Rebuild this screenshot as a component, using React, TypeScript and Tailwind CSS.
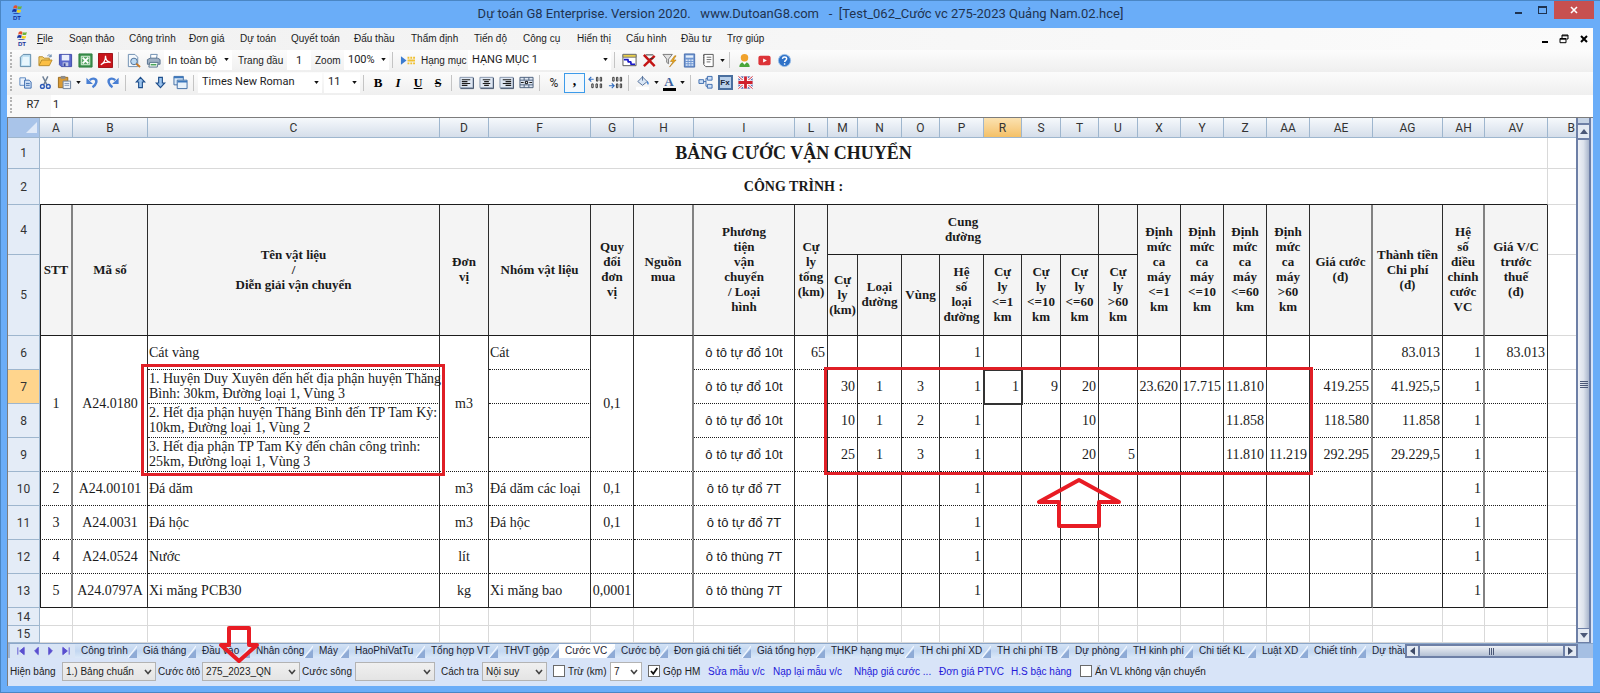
import React from "react";
import type { ReactNode } from "react";

const UI = "font-['Liberation_Sans',Arial,sans-serif]";
const SEGOE = "font-['Roboto','Noto_Sans',sans-serif]";
const SERIF = "font-['Liberation_Serif','Times_New_Roman',serif]";

/* ---------- shared pieces ---------- */

function Svg({ children, size = "size-[15px]", box = "0 0 16 16" }: { children: ReactNode; size?: string; box?: string }) {
  return (
    <svg viewBox={box} className={`${size} shrink-0`} fill="none" aria-hidden="true">
      {children}
    </svg>
  );
}

function Caret() {
  return (
    <svg viewBox="0 0 6 4" className="h-[3px] w-[5px] shrink-0" aria-hidden="true">
      <path d="M0 0h6L3 4z" fill="#111" />
    </svg>
  );
}

function Sep() {
  return <span className="ml-[3px] mr-1 h-4 w-px shrink-0 bg-[#c4c4c4]" />;
}

function Grip() {
  return <span className="ml-[3px] mr-[3px] h-4 w-0 shrink-0 border-l-2 border-dotted border-[#b4b4b4]" />;
}

function Tool({ label, children, wide }: { label: string; children: ReactNode; wide?: boolean }) {
  return (
    <button
      type="button"
      aria-label={label}
      className={`flex h-5 shrink-0 items-center justify-center gap-1 ${wide ? "w-[27px]" : "w-5"}`}
    >
      {children}
      {wide && <Caret />}
    </button>
  );
}

function Combo({ label, value, width, text }: { label: string; value: string; width: string; text: string }) {
  return (
    <span className={`relative flex h-5 shrink-0 items-center bg-white ${width}`}>
      <select aria-label={label} className={`h-full w-full appearance-none bg-transparent pl-1 text-[#1c1c1c] ${text}`}>
        <option>{value}</option>
      </select>
      <span className="pointer-events-none absolute right-[3px] top-2">
        <Caret />
      </span>
    </span>
  );
}

/* ---------- title bar ---------- */

function Logo() {
  return (
    <span className="flex w-3.5 shrink-0 flex-col items-center">
      <Svg size="h-2.5 w-3.5" box="0 0 14 11">
        <path d="M3.500 1c1.600-.9 2.800-.8 4 0L7 4c-1.500-.7-2.800-.7-4.300 0z" fill="#e8502a" />
        <path d="M8 1.300c1.600.6 2.800.6 4.300-.2L11.600 4c-1.500.7-2.800.7-4.200 0z" fill="#6db33a" />
        <path d="M2.300 5c1.600-.9 2.800-.8 4.400 0L6 8c-1.500-.7-2.800-.7-4.500 0z" fill="#16339e" />
        <path d="M7.200 5.300c1.600.6 2.800.6 4.300-.2L10.900 8c-1.500.7-2.800.7-4.300 0z" fill="#f4d416" />
        <path d="M2 9h6l3 1H4z" fill="#16339e" />
      </Svg>
      <span className={`text-[6px] font-bold leading-[6px] text-[#14309a] ${UI}`}>DT</span>
    </span>
  );
}

function TitleBar() {
  return (
    <header className={`relative flex h-7 items-start justify-between pl-[9px] ${SEGOE}`}>
      <span className="mt-[5px]">
        <Logo />
      </span>
      <h1 className="absolute inset-x-0 top-1 whitespace-pre text-center text-[13px] leading-5 text-[#1f3350]">
        {"Dự toán G8 Enterprise. Version 2020.   www.DutoanG8.com   -  [Test_062_Cước vc 275-2023 Quảng Nam.02.hce]"}
      </h1>
      <div className="relative mr-1.5 mt-px flex h-[18px]">
        <button type="button" aria-label="Thu nhỏ" className="flex w-6 items-end justify-center pb-[5px]">
          <span className="h-[2px] w-[7px] bg-[#1f3350]" />
        </button>
        <button type="button" aria-label="Phóng to" className="flex w-6 items-center justify-center">
          <span className="h-2 w-[9px] border border-t-2 border-[#1f3350]" />
        </button>
        <button type="button" aria-label="Đóng" className="flex w-10 items-center justify-center bg-[#c75050]">
          <Svg size="size-2" box="0 0 8 8">
            <path d="M1 1l6 6M7 1L1 7" stroke="#fff" strokeWidth="1.600" />
          </Svg>
        </button>
      </div>
    </header>
  );
}

/* ---------- menu ---------- */

const MENU: [string, string][] = [
  ["Soạn thảo", "w-[60px]"],
  ["Công trình", "w-[60px]"],
  ["Đơn giá", "w-[51px]"],
  ["Dự toán", "w-[51px]"],
  ["Quyết toán", "w-[63px]"],
  ["Đấu thầu", "w-[57px]"],
  ["Thẩm định", "w-[63px]"],
  ["Tiến độ", "w-[49px]"],
  ["Công cụ", "w-[54px]"],
  ["Hiển thị", "w-[49px]"],
  ["Cấu hình", "w-[55px]"],
  ["Đầu tư", "w-[46px]"],
  ["Trợ giúp", "w-[60px]"],
];

function MenuBar() {
  return (
    <nav className={`flex h-[22px] items-center bg-linear-to-r from-[#f1f1f1] to-[#fbfbfb] pb-px pl-2 text-[10px] text-[#1c1c1c] ${UI}`}>
      <Logo />
      <button type="button" className="ml-2 w-8 text-left">
        <span className="underline">F</span>ile
      </button>
      {MENU.map(([name, width]) => (
        <button key={name} type="button" className={`whitespace-nowrap text-left ${width}`}>
          {name}
        </button>
      ))}
      <div className="ml-auto mr-[5px] flex items-center gap-[11px]">
        <button type="button" aria-label="Thu nhỏ cửa sổ con" className="flex h-2 w-1.5 items-end">
          <span className="h-[2px] w-full bg-black" />
        </button>
        <button type="button" aria-label="Khôi phục cửa sổ con">
          <Svg size="size-2.5" box="0 0 10 10">
            <path d="M3 4V1h6v4H7.500M3 1.800h6M1 8.700V4.500h6v4.200zM1 5.200h6" stroke="#000" />
          </Svg>
        </button>
        <button type="button" aria-label="Đóng cửa sổ con">
          <Svg size="size-2" box="0 0 8 8">
            <path d="M1 1l6 6M7 1L1 7" stroke="#000" strokeWidth="2" />
          </Svg>
        </button>
      </div>
    </nav>
  );
}

/* ---------- toolbars ---------- */

const BAR = "flex items-center bg-linear-to-b from-[#fcfcfc] to-[#efefef] pb-[2px]";

function MainToolbar() {
  return (
    <div role="toolbar" aria-label="Công cụ chính" className={`${BAR} h-[22px]`}>
      <Grip />
      <Tool label="Tạo mới">
        <Svg>
          <path d="M2.500 4.500l3-3h8v13h-11z" fill="#b9dcf0" stroke="#5d87a8" />
          <path d="M5 4h7v9H4z" fill="#e8f6fd" />
        </Svg>
      </Tool>
      <Tool label="Mở">
        <Svg>
          <path d="M1 13V4h4l1.500 1.500H12V8" fill="#f5d06a" stroke="#b88a2a" />
          <path d="M1 13.500L4 7.500h11l-3 6z" fill="#fbbf45" stroke="#b88a2a" />
          <path d="M10 3c1.500-1.500 3-1 4 .5m0-2v2.500h-2.500" stroke="#5a7fa8" />
        </Svg>
      </Tool>
      <Tool label="Lưu">
        <Svg>
          <path d="M1.500 1.500h13v13h-11l-2-2z" fill="#5a68cc" stroke="#3d4aa8" />
          <path d="M4 2h8v6H4z" fill="#e9eefb" />
          <path d="M5 10h6v4H5z" fill="#c3cae6" />
          <path d="M6 11h2v3H6z" fill="#33409a" />
        </Svg>
      </Tool>
      <Tool label="Xuất Excel">
        <Svg>
          <path d="M1 1h14v14H1z" fill="#3f9450" stroke="#2a7a3c" />
          <path d="M3.500 3.500h9v9h-9z" fill="#5aa868" stroke="#e4f3e5" />
          <path d="M5 5l6 6M11 5l-6 6" stroke="#fff" strokeWidth="2" />
        </Svg>
      </Tool>
      <Tool label="Xuất PDF">
        <Svg>
          <path d="M.5.500h15v15H.5z" fill="#c8141a" stroke="#9c0d12" />
          <path d="M3 12.500c3-1.500 5-5.500 5-9.500 0 4 2 6.500 5.500 7C10 9.500 6 10 3 12.500z" stroke="#fff" strokeWidth="1.300" />
        </Svg>
      </Tool>
      <Sep />
      <Tool label="Xem trước">
        <Svg>
          <path d="M2.500 1.500h7l3 3v10h-10z" fill="#f4f8fc" stroke="#6c8caf" />
          <circle cx="8.500" cy="9" r="3.500" fill="#bcd9f2" stroke="#4d6f97" />
          <path d="M11 11.500l4 3.500" stroke="#c77a2b" strokeWidth="2" />
        </Svg>
      </Tool>
      <Tool label="In">
        <Svg>
          <path d="M5 6V1.500h7L11 6" fill="#fff" stroke="#6c8caf" />
          <path d="M1.500 7l3-1.500h8L15 7v5H1.500z" fill="#9fb0c4" stroke="#56708d" />
          <path d="M4 10h9l-1 5H3z" fill="#eefaee" stroke="#56708d" />
          <path d="M5 12.500h6" stroke="#4aa35a" strokeWidth="1.500" />
        </Svg>
      </Tool>
      <span className="w-px" />
      <Combo label="Phạm vi in" value="In toàn bộ" width="w-[68px]" text={`text-[11px] ${UI}`} />
      <label className={`flex items-center whitespace-nowrap pl-1.5 text-[10px] text-[#222] ${UI}`}>
        <span className="w-[49px]">Trang đầu</span>
        <input defaultValue="1" className={`h-5 w-6 bg-white text-center text-[11px] ${SEGOE}`} />
      </label>
      <span className={`w-[33px] pl-1 text-[10px] text-[#222] ${UI}`}>Zoom</span>
      <Combo label="Zoom" value="100%" width="w-[45px]" text={`text-[11px] ${SEGOE}`} />
      <Sep />
      <Tool label="Chèn hạng mục">
        <Svg>
          <path d="M1 3.500l6 4.500-6 4.500z" fill="#3b7bd0" />
          <path d="M8 4h2v2H8zM11 4h2v2h-2zM14 4h2v2h-2zM8 10h2v2H8zM11 10h2v2h-2zM14 10h2v2h-2zM8 7h8v2H8z" fill="#f0c030" />
        </Svg>
      </Tool>
      <span className={`w-[51px] whitespace-nowrap pl-1 text-[10px] text-[#222] ${UI}`}>Hạng mục</span>
      <Combo label="Hạng mục" value="HẠNG MỤC 1" width="w-[143px]" text={`text-[11px] ${SEGOE}`} />
      <Sep />
      <Tool label="Tiến độ">
        <Svg>
          <path d="M1 1.500h14v12H1z" fill="#fff" stroke="#555" />
          <path d="M1 1.500h14v3H1z" fill="#e8cf4a" stroke="#777" />
          <path d="M2 7h5M6 9.500h4M9 12h5M6.500 7v2.500M9.500 9.500V12" stroke="#1818c8" strokeWidth="1.800" />
        </Svg>
      </Tool>
      <Tool label="Xóa">
        <Svg>
          <path d="M2 2l11.500 12M13.500 3L2 14" stroke="#c41414" strokeWidth="2.600" />
          <path d="M4 2h8M8 6h4" stroke="#333" />
        </Svg>
      </Tool>
      <Tool label="Lọc nhanh">
        <Svg>
          <path d="M1 1.500h10L7 6.500v5l-2-1.500V6.500z" fill="#e2e2e2" stroke="#777" />
          <path d="M13.500 3L9 9h3l-4 6 7-7.500h-3L15 3z" fill="#f6b21c" stroke="#a86c10" strokeWidth=".6" />
        </Svg>
      </Tool>
      <Tool label="Máy tính">
        <Svg>
          <path d="M2.500 1h11v14h-11z" fill="#6f96d2" stroke="#4a6fae" />
          <path d="M4 2.500h8v2.500H4z" fill="#e6f0fb" />
          <path d="M4 7h2v1.500H4zM7 7h2v1.500H7zM10 7h2v1.500h-2zM4 9.500h2V11H4zM7 9.500h2V11H7zM10 9.500h2V11h-2zM4 12h2v1.500H4zM7 12h2v1.500H7zM10 12h2v1.500h-2z" fill="#dbe7f7" />
        </Svg>
      </Tool>
      <Tool label="Ghi chú" wide>
        <Svg>
          <path d="M3 1.500h10v13H5l-2-2z" fill="#fff" stroke="#555" />
          <path d="M6 4.500h5M6 7h5M6 9.500h4" stroke="#666" />
          <path d="M3 2v10" stroke="#333" strokeDasharray="1 1" />
        </Svg>
      </Tool>
      <Sep />
      <Tool label="Người dùng">
        <Svg>
          <path d="M2.500 15c0-4 2.500-5.500 5.500-5.500s5.500 1.500 5.500 5.500z" fill="#4aa63a" />
          <circle cx="8" cy="5" r="4" fill="#f0a22c" />
          <path d="M5.500 9.500L8 12.500l2.500-3z" fill="#fff" />
        </Svg>
      </Tool>
      <Tool label="Video">
        <Svg>
          <rect x="1.500" y="3" width="13" height="10" rx="2" fill="#dc3338" />
          <path d="M6.500 5.800l4 2.200-4 2.200z" fill="#fff" />
        </Svg>
      </Tool>
      <Tool label="Trợ giúp">
        <Svg>
          <circle cx="8" cy="8" r="6.500" fill="#2f72c8" stroke="#9bbfe8" />
          <path d="M5.800 6.300C6 4.800 7 4.300 8.100 4.300c1.300 0 2.200.8 2.200 1.900 0 1.600-2.200 1.700-2.200 3.500M8.100 11v1.500" stroke="#fff" strokeWidth="1.500" />
        </Svg>
      </Tool>
    </div>
  );
}

function AlignIcon({ d }: { d: string }) {
  return (
    <Svg>
      <path d="M1 2.500h14v11H1z" fill="#dfe7f2" stroke="#8494ab" />
      <path d="M15.500 3v11.500H1.500" stroke="#3f4f68" />
      <path d={d} stroke="#1e1e1e" strokeWidth="1.200" />
    </Svg>
  );
}

function FormatToolbar() {
  return (
    <div role="toolbar" aria-label="Định dạng" className={`${BAR} h-[23px]`}>
      <Grip />
      <Tool label="Sao chép">
        <Svg>
          <path d="M2 3h6v8H2z" fill="#eaf2fc" stroke="#5a86c0" />
          <path d="M7 5.500h5l2 2V14H7z" fill="#cfe0f6" stroke="#3c6cae" />
          <path d="M8.500 9h4M8.500 11h4" stroke="#3c6cae" />
        </Svg>
      </Tool>
      <Tool label="Cắt">
        <Svg>
          <path d="M5 1.500l4.500 9M10.500 1.500L6 10.500" stroke="#6d7f96" strokeWidth="1.500" />
          <circle cx="4.700" cy="12.200" r="2" stroke="#2c59b8" strokeWidth="1.500" />
          <circle cx="11" cy="12.200" r="2" stroke="#2c59b8" strokeWidth="1.500" />
        </Svg>
      </Tool>
      <Tool label="Dán" wide>
        <Svg>
          <path d="M1.500 2.500h10v11h-10z" fill="#d99a35" stroke="#9a6a1c" />
          <path d="M4 1h5v3H4z" fill="#8d8d8d" />
          <path d="M6.500 6.500h8v8h-8z" fill="#eef3fa" stroke="#6a7f9c" />
          <path d="M8 9h5M8 11h5" stroke="#7c93b2" />
        </Svg>
      </Tool>
      <Tool label="Hoàn tác">
        <Svg>
          <path d="M5 5.500C8.500 2.500 13 4 12 8c-.6 2.300-2 3.700-4 5" stroke="#4a80d4" strokeWidth="2.600" />
          <path d="M1.500 3v6.500h7z" fill="#4a80d4" />
        </Svg>
      </Tool>
      <Tool label="Làm lại">
        <Svg>
          <path d="M11 5.500C7.500 2.500 3 4 4 8c.6 2.300 2 3.700 4 5" stroke="#4a80d4" strokeWidth="2.600" />
          <path d="M14.500 3v6.500h-7z" fill="#4a80d4" />
        </Svg>
      </Tool>
      <Sep />
      <Tool label="Lên">
        <Svg>
          <path d="M8 2.500l4.500 5H10v6H6v-6H3.500z" fill="#9cc4ee" stroke="#1f4f8c" strokeWidth="1.200" />
        </Svg>
      </Tool>
      <Tool label="Xuống">
        <Svg>
          <path d="M8 13.500l4.500-5H10v-6H6v6H3.500z" fill="#9cc4ee" stroke="#1f4f8c" strokeWidth="1.200" />
        </Svg>
      </Tool>
      <Tool label="Cửa sổ">
        <Svg>
          <path d="M1 1.500h10v9H1z" fill="#dceaf8" stroke="#3f6da4" />
          <path d="M4.500 5.500h10.500v9H4.500z" fill="#e8f2fb" stroke="#3f6da4" />
          <path d="M1 2.500h10M5 7h10" stroke="#3c78bd" strokeWidth="2" />
        </Svg>
      </Tool>
      <Sep />
      <Combo label="Phông chữ" value="Times New Roman" width="w-[124px]" text={`text-[11px] ${SEGOE}`} />
      <span className="w-[2px]" />
      <Combo label="Cỡ chữ" value="11" width="w-[36px]" text={`text-[11px] ${SEGOE}`} />
      <Sep />
      <Tool label="Đậm">
        <b className={`text-[13px] ${SERIF}`}>B</b>
      </Tool>
      <Tool label="Nghiêng">
        <b className={`text-[13px] italic ${SERIF}`}>I</b>
      </Tool>
      <Tool label="Gạch chân">
        <b className={`text-[12px] underline ${SERIF}`}>U</b>
      </Tool>
      <Tool label="Gạch ngang">
        <b className={`text-[12px] line-through ${SERIF}`}>S</b>
      </Tool>
      <Sep />
      <Tool label="Canh trái">
        <AlignIcon d="M3 5h9M3 7h6M3 9h9M3 11h6" />
      </Tool>
      <Tool label="Canh giữa">
        <AlignIcon d="M4 5h8M5.500 7h5M4 9h8M5.500 11h5" />
      </Tool>
      <Tool label="Canh phải">
        <AlignIcon d="M4 5h9M7 7h6M4 9h9M7 11h6" />
      </Tool>
      <Tool label="Trộn ô">
        <Svg>
          <path d="M1 2.500h14v11H1zM1 5.500h14M1 10.500h14M5.500 2.500v3M10.500 2.500v3M5.500 10.500v3M10.500 10.500v3" fill="#dfe7f2" stroke="#4b5f7c" />
          <path d="M2 8h3M11 8h3" stroke="#1e1e1e" strokeWidth="1.200" />
          <circle cx="8" cy="8" r="1.300" stroke="#1e1e1e" strokeWidth="1.200" />
        </Svg>
      </Tool>
      <Sep />
      <Tool label="Phần trăm">
        <span className={`text-[12px] text-[#222] ${SEGOE}`}>%</span>
      </Tool>
      <button
        type="button"
        aria-label="Phân cách hàng nghìn"
        className={`h-5 w-[21px] shrink-0 border border-[#3c9bea] bg-[#f2f8fd] pb-1 text-[14px] font-bold leading-3 ${SERIF}`}
      >
        ,
      </button>
      <Tool label="Thêm số lẻ">
        <Svg>
          <path d="M1 4.500h5M3.500 2L1 4.500 3.500 7" stroke="#2f6cc0" strokeWidth="1.200" />
          <path d="M9 2.500h1.500v4H9zM13 2.500h1.500v4H13zM4 9.500h1.500v4H4zM8.500 9.500H10v4H8.500zM13 9.500h1.500v4H13z" stroke="#333" />
        </Svg>
      </Tool>
      <Tool label="Bớt số lẻ">
        <Svg>
          <path d="M1 11.500h5M4 9l2.500 2.500L4 14" stroke="#2f6cc0" strokeWidth="1.200" />
          <path d="M5 2.500h1.500v4H5zM9 2.500h1.500v4H9zM13 2.500h1.500v4H13zM9 9.500h1.500v4H9zM13 9.500h1.500v4H13z" stroke="#333" />
        </Svg>
      </Tool>
      <Sep />
      <Tool label="Màu nền" wide>
        <Svg>
          <path d="M3 7l5-5 5 5-5 4z" fill="#d9e6f5" stroke="#54709a" />
          <path d="M8 1v5" stroke="#54709a" />
          <path d="M13 6c2 2 2 3 1 4.500-1.200-1-1.400-2.500-1-4.500z" fill="#3f7fd2" />
          <path d="M1 12.500h14V16H1z" fill="#fff" />
        </Svg>
      </Tool>
      <Tool label="Màu chữ" wide>
        <span className={`flex h-4 w-[13px] flex-col items-center justify-end border-b-[3px] border-black text-[13px] font-bold leading-3 text-[#3a5f9c] ${SERIF}`}>
          A
        </span>
      </Tool>
      <Sep />
      <Tool label="Sơ đồ">
        <Svg>
          <path d="M1 5h5v4H1zM10 1.500h5v4h-5zM10 10h5v4h-5z" fill="#cfe0f6" stroke="#3c6cae" />
          <path d="M6 7h2.500M10 3.500H8.500v8.500H10" stroke="#3c6cae" />
        </Svg>
      </Tool>
      <Tool label="Hàm">
        <span className={`flex size-[15px] items-center justify-center border-2 border-[#4a6f9f] bg-[#b9d0ea] text-[8px] font-bold text-[#16233a] ${UI}`}>
          Fx
        </span>
      </Tool>
      <Tool label="Ngôn ngữ">
        <Svg>
          <path d="M.5 1.500h15v13H.5z" fill="#4a5ba8" />
          <path d="M.5 1.500l15 13M15.500 1.500l-15 13" stroke="#fff" strokeWidth="3" />
          <path d="M.5 1.500l15 13M15.500 1.500l-15 13" stroke="#d0202c" strokeWidth="1" />
          <path d="M8 1.500v13M.5 8h15" stroke="#fff" strokeWidth="5" />
          <path d="M8 1.500v13M.5 8h15" stroke="#d0202c" strokeWidth="3" />
        </Svg>
      </Tool>
    </div>
  );
}

function FormulaBar() {
  return (
    <div className={`flex h-[22px] items-center bg-white text-[11px] text-[#222] ${SEGOE}`}>
      <div className="flex h-full w-11 items-center bg-[#f8f8f8] pb-[2px]">
        <Grip />
        <span className="flex-1 text-center">R7</span>
      </div>
      <input aria-label="Công thức" defaultValue="1" className="h-full flex-1 bg-white pb-1 pl-[2px]" />
    </div>
  );
}

/* ---------- sheet ---------- */

const COLS: [string, string][] = [
  ["A", "w-[33px]"],
  ["B", "w-[75px]"],
  ["C", ""],
  ["D", "w-[49px]"],
  ["F", "w-[102px]"],
  ["G", "w-[43px]"],
  ["H", "w-[60px]"],
  ["I", "w-[101px]"],
  ["L", "w-[33px]"],
  ["M", "w-[30px]"],
  ["N", "w-[44px]"],
  ["O", "w-[38px]"],
  ["P", "w-[44px]"],
  ["R", "w-[38px]"],
  ["S", "w-[39px]"],
  ["T", "w-[38px]"],
  ["U", "w-[39px]"],
  ["X", "w-[43px]"],
  ["Y", "w-[43px]"],
  ["Z", "w-[43px]"],
  ["AA", "w-[43px]"],
  ["AE", "w-[63px]"],
  ["AG", "w-[70px]"],
  ["AH", "w-[42px]"],
  ["AV", "w-[63px]"],
];

const CENTER = ["A", "B", "D", "G", "H", "I", "N", "O"];
const LEFT = ["C", "F"];
const SOFT = ["A", "H", "AE", "AH"];

function rightLine(col: string) {
  return SOFT.includes(col) ? "border-r-2 border-r-[#828282]" : "border-r border-r-[#2c2c2c]";
}

function Head({ col, rows = 2, span = 1, children }: { col: string; rows?: number; span?: number; children?: ReactNode }) {
  return (
    <th
      rowSpan={rows}
      colSpan={span}
      className={`whitespace-pre border-b border-b-[#1c1c1c] bg-[#f4f4f4] px-0 pb-[2px] pt-0 text-center align-middle text-[13px] font-bold leading-[15px] ${rightLine(col)} ${
        col === "A" ? "border-l border-l-[#1c1c1c]" : ""
      }`}
    >
      {children}
    </th>
  );
}

function RowHead({ n, height }: { n: string; height: string }) {
  return (
    <th
      scope="row"
      className={`border-b border-r border-[#9eb6ce] p-0 text-center text-[12px] font-normal text-[#333] ${SEGOE} ${height} ${
        n === "7" ? "bg-[#ffd58d]" : "bg-[#e4ecf7]"
      }`}
    >
      {n}
    </th>
  );
}

function Outside() {
  return <td className="border-b border-[#d9d9d9] p-0" />;
}

type Row = { n: string; v: Record<string, string>; merged?: "start" | "in"; last?: boolean };

const MERGED = ["A", "B", "D", "G", "H"];

const ROWS: Row[] = [
  { n: "6", merged: "start", v: { A: "1", B: "A24.0180", C: "Cát vàng", D: "m3", F: "Cát", G: "0,1", I: "ô tô tự đổ 10t", L: "65", P: "1", AG: "83.013", AH: "1", AV: "83.013" } },
  { n: "7", merged: "in", v: { C: "1. Huyện Duy Xuyên đến hết địa phận huyện Thăng\nBình: 30km, Đường loại 1, Vùng 3", I: "ô tô tự đổ 10t", M: "30", N: "1", O: "3", P: "1", R: "1", S: "9", T: "20", X: "23.620", Y: "17.715", Z: "11.810", AE: "419.255", AG: "41.925,5", AH: "1" } },
  { n: "8", merged: "in", v: { C: "2. Hết địa phận huyện Thăng Bình đến TP Tam Kỳ:\n10km, Đường loại 1, Vùng 2", I: "ô tô tự đổ 10t", M: "10", N: "1", O: "2", P: "1", T: "10", Z: "11.858", AE: "118.580", AG: "11.858", AH: "1" } },
  { n: "9", merged: "in", v: { C: "3. Hết địa phận TP Tam Kỳ đến chân công trình:\n25km, Đường loại 1, Vùng 3", I: "ô tô tự đổ 10t", M: "25", N: "1", O: "3", P: "1", T: "20", U: "5", Z: "11.810", AA: "11.219", AE: "292.295", AG: "29.229,5", AH: "1" } },
  { n: "10", v: { A: "2", B: "A24.00101", C: "Đá dăm", D: "m3", F: "Đá dăm các loại", G: "0,1", I: "ô tô tự đổ 7T", P: "1", AH: "1" } },
  { n: "11", v: { A: "3", B: "A24.0031", C: "Đá hộc", D: "m3", F: "Đá hộc", G: "0,1", I: "ô tô tự đổ 7T", P: "1", AH: "1" } },
  { n: "12", v: { A: "4", B: "A24.0524", C: "Nước", D: "lít", I: "ô tô thùng 7T", P: "1", AH: "1" } },
  { n: "13", last: true, v: { A: "5", B: "A24.0797A", C: "Xi măng PCB30", D: "kg", F: "Xi măng bao", G: "0,0001", I: "ô tô thùng 7T", P: "1", AH: "1" } },
];

function BodyRow({ row }: { row: Row }) {
  return (
    <tr>
      <RowHead n={row.n} height="h-[34px]" />
      {COLS.map(([col]) => {
        if (row.merged === "in" && MERGED.includes(col)) return null;
        const align = CENTER.includes(col) ? "px-0 text-center" : LEFT.includes(col) ? "pl-px pr-0 text-left" : "pl-0 pr-[2px] text-right";
        const font = col === "I" ? `text-[13px] ${UI}` : "text-[14px]";
        const selected = row.n === "7" && col === "R";
        return (
          <td
            key={col}
            rowSpan={row.merged === "start" && MERGED.includes(col) ? 4 : 1}
            className={`whitespace-pre border-b border-b-[#1c1c1c] pb-px pt-0 align-middle leading-[15px] ${
              row.last ? "" : "[border-bottom-style:dotted]"
            } ${rightLine(col)} ${col === "A" ? "border-l border-l-[#1c1c1c]" : ""} ${
              selected ? "outline-2 -outline-offset-1 outline-[#333]" : ""
            } ${align} ${font}`}
          >
            {row.v[col]}
          </td>
        );
      })}
      <Outside />
    </tr>
  );
}

function Sheet() {
  return (
    <div className="relative min-w-0 flex-1">
      <table className={`w-full table-fixed border-separate border-spacing-0 bg-white text-[#1a1a1a] ${SERIF}`}>
        <colgroup>
          <col className="w-[32px]" />
          {COLS.map(([c, w]) => (
            <col key={c} className={w} />
          ))}
          <col className="w-[28px]" />
        </colgroup>
        <thead>
          <tr className={SEGOE}>
            <th aria-label="Chọn tất cả" className="h-5 border-b border-r border-[#9eb6ce] bg-[#a9c4e9] p-0">
              <svg viewBox="0 0 10 10" className="ml-auto mr-[2px] size-[11px]" aria-hidden="true">
                <path d="M10 0v10H0z" fill="#dfe9f8" />
              </svg>
            </th>
            {[...COLS.map(([c]) => c), "B "].map((c) => (
              <th
                key={c}
                scope="col"
                className={`h-5 border-b border-r border-[#9eb6ce] p-0 text-[12px] font-normal leading-4 text-[#333] ${
                  c === "R" ? "bg-linear-to-b from-[#fbe2b0] to-[#f4c066]" : "bg-linear-to-b from-[#f6f9fc] to-[#d5deea]"
                } ${c === "B " ? "border-r-0 pr-px text-right" : "text-center"}`}
              >
                {c.trim()}
              </th>
            ))}
          </tr>
        </thead>
        <tbody>
          <tr>
            <RowHead n="1" height="h-[31px]" />
            <td colSpan={25} className="border-b border-r border-[#d9d9d9] p-0 text-center text-[18px] font-bold leading-5">
              BẢNG CƯỚC VẬN CHUYỂN
            </td>
            <Outside />
          </tr>
          <tr>
            <RowHead n="2" height="h-[36px]" />
            <td colSpan={25} className="border-b border-r border-b-[#1c1c1c] border-r-[#d9d9d9] p-0 text-center text-[14px] font-bold leading-5">
              CÔNG TRÌNH :
            </td>
            <Outside />
          </tr>
          <tr>
            <RowHead n="4" height="h-[50px]" />
            <Head col="A">STT</Head>
            <Head col="B">Mã số</Head>
            <Head col="C">{"Tên vật liệu\n/\nDiễn giải vận chuyển"}</Head>
            <Head col="D">{"Đơn\nvị"}</Head>
            <Head col="F">Nhóm vật liệu</Head>
            <Head col="G">{"Quy\nđổi\nđơn\nvị"}</Head>
            <Head col="H">{"Nguồn\nmua"}</Head>
            <Head col="I">{"Phương\ntiện\nvận\nchuyển\n/ Loại\nhình"}</Head>
            <Head col="L">{"Cự\nly\ntổng\n(km)"}</Head>
            <Head col="M" rows={1} span={7}>
              {"Cung\nđường"}
            </Head>
            <Head col="U" rows={1} />
            <Head col="X">{"Định\nmức\nca\nmáy\n<=1\nkm"}</Head>
            <Head col="Y">{"Định\nmức\nca\nmáy\n<=10\nkm"}</Head>
            <Head col="Z">{"Định\nmức\nca\nmáy\n<=60\nkm"}</Head>
            <Head col="AA">{"Định\nmức\nca\nmáy\n>60\nkm"}</Head>
            <Head col="AE">{"Giá cước\n(đ)"}</Head>
            <Head col="AG">{"Thành tiền\nChi phí\n(đ)"}</Head>
            <Head col="AH">{"Hệ\nsố\nđiều\nchỉnh\ncước\nVC"}</Head>
            <Head col="AV">{"Giá V/C\ntrước\nthuế\n(đ)"}</Head>
            <Outside />
          </tr>
          <tr>
            <RowHead n="5" height="h-[81px]" />
            <Head col="M" rows={1}>{"Cự\nly\n(km)"}</Head>
            <Head col="N" rows={1}>{"Loại\nđường"}</Head>
            <Head col="O" rows={1}>Vùng</Head>
            <Head col="P" rows={1}>{"Hệ\nsố\nloại\nđường"}</Head>
            <Head col="R" rows={1}>{"Cự\nly\n<=1\nkm"}</Head>
            <Head col="S" rows={1}>{"Cự\nly\n<=10\nkm"}</Head>
            <Head col="T" rows={1}>{"Cự\nly\n<=60\nkm"}</Head>
            <Head col="U" rows={1}>{"Cự\nly\n>60\nkm"}</Head>
            <Outside />
          </tr>
          {ROWS.map((r) => (
            <BodyRow key={r.n} row={r} />
          ))}
          {[
            ["14", "h-[18px]"],
            ["15", "h-[17px]"],
          ].map(([n, h]) => (
            <tr key={n} className="leading-4">
              <RowHead n={n} height={h} />
              {COLS.map(([c]) => (
                <td key={c} className="border-b border-r border-[#d9d9d9] p-0" />
              ))}
              <Outside />
            </tr>
          ))}
        </tbody>
      </table>

      {/* red annotations lying over the cells */}
      <div className="pointer-events-none absolute left-[133px] top-[246px] h-[112px] w-[304px] border-[3px] border-[#e01f26]" />
      <div className="pointer-events-none absolute left-[816px] top-[249px] h-[108px] w-[489px] border-[3px] border-[#e01f26]" />
      <svg viewBox="0 0 86 52" className="pointer-events-none absolute left-[1028px] top-[359px] h-[52px] w-[86px]" fill="none" aria-hidden="true">
        <path d="M43 3L3 25h20v24h40V25h20z" stroke="#e81c24" strokeWidth="4" strokeLinejoin="round" />
      </svg>
      <svg viewBox="0 0 42 38" className="pointer-events-none absolute left-[210px] top-[508px] z-10 h-[38px] w-[42px]" fill="none" aria-hidden="true">
        <path d="M21 35L3 19h8V2h20v17h8z" stroke="#e81c24" strokeWidth="4" strokeLinejoin="round" />
      </svg>
    </div>
  );
}

function VerticalScroll() {
  return (
    <div className="flex w-[15px] shrink-0 flex-col border-x-2 border-[#6d7fa6] bg-[#dfe5ef]">
      <div className="h-[7px] border-b-2 border-[#6d7fa6] bg-[#c6d4e6]" />
      <button type="button" aria-label="Cuộn lên" className="flex h-[15px] items-center justify-center border-b-2 border-[#6d7fa6] bg-[#e4eaf3]">
        <svg viewBox="0 0 8 5" className="h-[5px] w-2" aria-hidden="true">
          <path d="M4 0l4 5H0z" fill="#4b5878" />
        </svg>
      </button>
      <div className="flex flex-1 items-center justify-center bg-linear-to-r from-[#eef1f6] via-[#dde3ec] to-[#a9b6cc]">
        <span className="flex flex-col gap-px">
          <i className="h-px w-2 bg-[#4b5878]" />
          <i className="h-px w-2 bg-[#4b5878]" />
          <i className="h-px w-2 bg-[#4b5878]" />
          <i className="h-px w-2 bg-[#4b5878]" />
        </span>
      </div>
      <button type="button" aria-label="Cuộn xuống" className="flex h-[15px] items-center justify-center border-y border-[#6d7fa6] bg-[#e4eaf3]">
        <svg viewBox="0 0 8 5" className="h-[5px] w-2" aria-hidden="true">
          <path d="M0 0h8L4 5z" fill="#4b5878" />
        </svg>
      </button>
    </div>
  );
}

/* ---------- sheet tabs ---------- */

const TABS: [string, string][] = [
  ["Công trình", "w-[62px]"],
  ["Giá tháng", "w-[59px]"],
  ["Đầu vào", "w-[54px]"],
  ["Nhân công", "w-[63px]"],
  ["Máy", "w-[36px]"],
  ["HaoPhiVatTu", "w-[76px]"],
  ["Tổng hợp VT", "w-[73px]"],
  ["THVT gộp", "w-[61px]"],
  ["Cước VC", "w-[56px]"],
  ["Cước bộ", "w-[53px]"],
  ["Đơn giá chi tiết", "w-[83px]"],
  ["Giá tổng hợp", "w-[74px]"],
  ["THKP hạng mục", "w-[89px]"],
  ["TH chi phí XD", "w-[77px]"],
  ["TH chi phí TB", "w-[78px]"],
  ["Dự phòng", "w-[58px]"],
  ["TH kinh phí", "w-[66px]"],
  ["Chi tiết KL", "w-[63px]"],
  ["Luật XD", "w-[52px]"],
  ["Chiết tính", "w-[58px]"],
  ["Dự thầu", "w-[55px]"],
];

const NAV: [string, string][] = [
  ["Trang đầu tiên", "M2 1v8M9 1v8L4 5z"],
  ["Trang trước", "M8 1v8L4 5z"],
  ["Trang sau", "M3 1v8l4-4z"],
  ["Trang cuối", "M9 1v8M2 1v8l5-4z"],
];

function SheetTabs() {
  return (
    <div className={`flex h-[15px] border-t border-[#8ba6c9] bg-[#a5bfe3] text-[10px] text-[#1d2433] ${UI}`}>
      <div className="flex w-[67px] shrink-0 items-center justify-between border-l-2 border-[#9db6d8] bg-[#d8e4f5] pl-1.5 pr-1">
        {NAV.map(([name, d]) => (
          <button key={name} type="button" aria-label={name}>
            <svg viewBox="0 0 11 10" className="size-2.5" aria-hidden="true">
              <path d={d} fill="#5a4fcf" stroke="#5a4fcf" />
            </svg>
          </button>
        ))}
      </div>
      <div role="tablist" aria-label="Bảng tính" className="flex min-w-0 flex-1 overflow-hidden">
        {TABS.map(([name, width]) => {
          const active = name === "Cước VC";
          return (
            <button
              key={name}
              type="button"
              role="tab"
              aria-selected={active}
              className={`flex shrink-0 items-center justify-between whitespace-nowrap pl-[6px] leading-[14px] ${width} ${
                active ? "bg-white" : "bg-linear-to-b from-[#d3e2f5] via-[#c2d7f1] to-[#dbe8f8]"
              }`}
            >
              {name}
              <svg viewBox="0 0 9 14" className="-ml-[9px] h-[14px] w-[9px] shrink-0" aria-hidden="true">
                <path d="M9 5v9H0z" fill="#8fabd6" />
                <path d="M0 14L9 2" stroke="#f3f8ff" strokeWidth="1.200" />
              </svg>
            </button>
          );
        })}
      </div>
      <div className="flex w-[173px] shrink-0 border-2 border-[#6d7fa6] bg-[#e4eaf3]">
        <button type="button" aria-label="Cuộn trái" className="flex w-[13px] items-center justify-center border-r-2 border-[#6d7fa6]">
          <svg viewBox="0 0 5 8" className="h-2 w-[5px]" aria-hidden="true">
            <path d="M5 0v8L0 4z" fill="#3f4b68" />
          </svg>
        </button>
        <div className="flex flex-1 items-center justify-center gap-px bg-linear-to-b from-[#eef1f6] to-[#b4c0d4]">
          <i className="h-[7px] w-px bg-[#4b5878]" />
          <i className="h-[7px] w-px bg-[#4b5878]" />
          <i className="h-[7px] w-px bg-[#4b5878]" />
        </div>
        <button type="button" aria-label="Cuộn phải" className="flex w-[13px] items-center justify-center border-l-2 border-[#6d7fa6]">
          <svg viewBox="0 0 5 8" className="h-2 w-[5px]" aria-hidden="true">
            <path d="M0 0v8l5-4z" fill="#3f4b68" />
          </svg>
        </button>
      </div>
      <span className="w-[15px] shrink-0" />
    </div>
  );
}

/* ---------- option bar ---------- */

function OptionSelect({ id, label, value, labelWidth, width, white }: { id: string; label: string; value: string; labelWidth: string; width: string; white?: boolean }) {
  return (
    <>
      {label && (
        <label htmlFor={id} className={`shrink-0 ${labelWidth}`}>
          {label}
        </label>
      )}
      <span className={`relative flex h-[19px] shrink-0 border border-[#b3b3b3] ${white ? "bg-white" : "bg-linear-to-b from-[#f0f0f0] to-[#e4e4e4]"} ${width}`}>
        <select id={id} aria-label={label || "Số km"} className="w-full appearance-none bg-transparent pl-[3px] text-[#1c1c1c]">
          <option>{value}</option>
        </select>
        <svg viewBox="0 0 8 6" className="pointer-events-none absolute right-[3px] top-[6px] h-[6px] w-2" fill="none" aria-hidden="true">
          <path d="M1 1l3 3.500L7 1" stroke="#444" strokeWidth="1.600" />
        </svg>
      </span>
    </>
  );
}

function Check({ label, width, on }: { label: string; width: string; on?: boolean }) {
  return (
    <label className={`flex shrink-0 items-center gap-[3px] ${width}`}>
      <span className="relative flex size-3 shrink-0">
        <input type="checkbox" defaultChecked={on} className="peer size-3 appearance-none border border-[#6a6a6a] bg-white" />
        <svg viewBox="0 0 12 12" className="pointer-events-none absolute inset-0 hidden size-3 peer-checked:block" fill="none" aria-hidden="true">
          <path d="M3 6l2.300 2.800L9.300 3" stroke="#111" strokeWidth="1.800" />
        </svg>
      </span>
      {label}
    </label>
  );
}

const LINKS: [string, string][] = [
  ["Sửa mẫu v/c", "w-[65px]"],
  ["Nạp lại mẫu v/c", "w-[81px]"],
  ["Nhập giá cước ...", "w-[85px]"],
  ["Đơn giá PTVC", "w-[72px]"],
  ["H.S bậc hàng", "w-[69px]"],
];

function OptionBar() {
  return (
    <div className={`flex h-7 items-center whitespace-nowrap bg-[#d8e4f8] pb-[2px] pl-[2px] text-[10px] text-[#222] ${UI}`}>
      <OptionSelect id="view" label="Hiện bảng" value="1.) Bảng chuẩn" labelWidth="w-[52px]" width="w-[94px]" />
      <span className="w-[2px]" />
      <OptionSelect id="road" label="Cước ôtô" value="275_2023_QN" labelWidth="w-[44px]" width="w-[98px]" />
      <span className="w-[2px]" />
      <OptionSelect id="river" label="Cước sông" value="" labelWidth="w-[53px]" width="w-[80px]" />
      <span className="w-[6px]" />
      <OptionSelect id="lookup" label="Cách tra" value="Nội suy" labelWidth="w-[41px]" width="w-[65px]" />
      <span className="w-[6px]" />
      <Check label="Trừ (km)" width="w-[57px]" />
      <OptionSelect id="km" label="" value="7" labelWidth="" width="w-[32px]" white />
      <span className="w-[6px]" />
      <Check label="Gộp HM" width="w-[60px]" on />
      {LINKS.map(([name, width]) => (
        <a key={name} href="#" className={`shrink-0 text-[#2318d8] ${width}`}>
          {name}
        </a>
      ))}
      <Check label="Ẩn VL không vận chuyển" width="w-[130px]" />
    </div>
  );
}

export default function App() {
  return (
    <div className="border-l border-t border-[#4a86c4] bg-[#6aadf8]">
      <div className="-mt-px">
        <TitleBar />
      </div>
      <main className="ml-1.5 mr-[7px] bg-white">
        <MenuBar />
        <MainToolbar />
        <FormatToolbar />
        <FormulaBar />
        <div className="border-l border-t border-[#7c7c7c] bg-[#d8e4f8]">
          <div className="flex pr-[2px]">
            <Sheet />
            <VerticalScroll />
          </div>
          <SheetTabs />
          <OptionBar />
        </div>
      </main>
      <div className="h-[7px] border-b border-[#4a86c4]" />
    </div>
  );
}
